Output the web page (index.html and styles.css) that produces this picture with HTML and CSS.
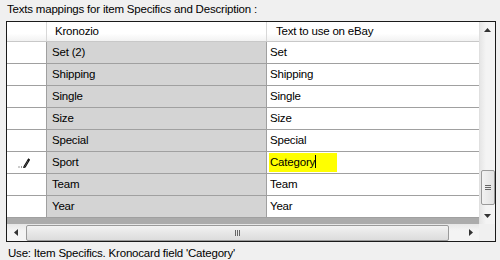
FILE: index.html
```html
<!DOCTYPE html>
<html>
<head>
<meta charset="utf-8">
<link rel="stylesheet" href="styles.css">
</head>
<body>
<div class="title">Texts mappings for item Specifics and Description :</div>
<div class="grid">
  <div class="main">
    <div class="row head">
      <div class="rh"></div>
      <div class="c1">Kronozio</div>
      <div class="c2">Text to use on eBay</div>
    </div>
    <div class="row"><div class="rh"></div><div class="c1">Set (2)</div><div class="c2">Set</div></div>
    <div class="row"><div class="rh"></div><div class="c1">Shipping</div><div class="c2">Shipping</div></div>
    <div class="row"><div class="rh"></div><div class="c1">Single</div><div class="c2">Single</div></div>
    <div class="row"><div class="rh"></div><div class="c1">Size</div><div class="c2">Size</div></div>
    <div class="row"><div class="rh"></div><div class="c1">Special</div><div class="c2">Special</div></div>
    <div class="row"><div class="rh"><svg class="pencil" width="12" height="11" viewBox="0 0 12 11"><path d="M0.5 10h1M3 10h1" stroke="#333" stroke-width="1"/><path d="M6 9.5 L10.5 2 L11.5 2.7 L7.2 10 L5.8 10.5 Z" fill="none" stroke="#111" stroke-width="1.1"/><path d="M9.8 3.2 L11 4" stroke="#111" stroke-width="0.9"/></svg></div><div class="c1">Sport</div><div class="c2"><span class="edit">Category<span class="caret"></span></span></div></div>
    <div class="row"><div class="rh"></div><div class="c1">Team</div><div class="c2">Team</div></div>
    <div class="row"><div class="rh"></div><div class="c1">Year</div><div class="c2">Year</div></div>
    <div class="band"></div>
  </div>
  <div class="vscroll">
    <div class="btn"><svg width="7" height="4" viewBox="0 0 7 4"><path d="M0 4 L3.5 0 L7 4 Z" fill="#333"/></svg></div>
    <div class="vtrack"><div class="vthumb"><span></span><span></span><span></span></div></div>
    <div class="btn"><svg width="7" height="4" viewBox="0 0 7 4"><path d="M0 0 L3.5 4 L7 0 Z" fill="#333"/></svg></div>
  </div>
  <div class="hscroll">
    <div class="hbtn"><svg width="4" height="7" viewBox="0 0 4 7"><path d="M4 0 L0 3.5 L4 7 Z" fill="#333"/></svg></div>
    <div class="htrack"><div class="hthumb"><span></span><span></span><span></span></div></div>
    <div class="hbtn"><svg width="4" height="7" viewBox="0 0 4 7"><path d="M0 0 L4 3.5 L0 7 Z" fill="#333"/></svg></div>
  </div>
  <div class="corner"></div>
</div>
<div class="status">Use: Item Specifics. Kronocard field 'Category'</div>
</body>
</html>
```
FILE: styles.css
```css
* { box-sizing: border-box; }
body {
  margin: 0;
  width: 500px;
  height: 260px;
  background: #f0f0f0;
  font-family: "Liberation Sans", Arial, sans-serif;
  font-size: 11.5px;
  letter-spacing: -0.2px;
  color: #000;
  overflow: hidden;
}
.title {
  height: 21px;
  padding: 2px 0 0 7px;
  line-height: 14px;
}
.grid {
  margin-left: 6px;
  width: 490px;
  height: 221px;
  border: 1px solid #1a1a1a;
  display: grid;
  grid-template-columns: 472px 16px;
  grid-template-rows: 202px 17px;
  background: #f0f0f0;
}
.main {
  display: flex;
  flex-direction: column;
  background: #ababab;
}
.row {
  display: grid;
  grid-template-columns: 40px 220px 212px;
  height: 22px;
  border-bottom: 1px solid #a0a0a0;
}
.row > div {
  line-height: 21px;
  white-space: nowrap;
  overflow: hidden;
}
.rh {
  background: #fff;
  border-right: 1px solid #a0a0a0;
  display: flex;
  align-items: center;
  padding-left: 7px;
}
.c1 {
  background: #d4d4d4;
  border-right: 1px solid #a0a0a0;
  padding-left: 5px;
}
.c2 {
  background: #fff;
  padding-left: 3px;
}
.row.head {
  height: 20px;
  border-bottom: 1px solid #c8c8c8;
}
.row.head > div {
  background: linear-gradient(#ffffff, #ffffff 60%, #f2f2f2);
  line-height: 19px;
  border-right: 1px solid #d8d8d8;
}
.row.head .c1 { padding-left: 8px; }
.row.head .c2 { padding-left: 9px; border-right: none; }
.pencil { display: block; margin-left: 4px; }
.edit {
  display: inline-block;
  background: #ffff00;
  height: 19px;
  width: 68px;
  margin-left: -1px;
  padding-left: 1px;
  line-height: 19px;
  vertical-align: top;
  margin-top: 1px;
}
.caret {
  display: inline-block;
  width: 1px;
  height: 13px;
  background: #000;
  vertical-align: -2px;
}
.band { height: 6px; }
.vscroll {
  display: flex;
  flex-direction: column;
  background: linear-gradient(90deg, #e6e6e6, #f4f4f4 40%, #f4f4f4);
  border-left: 1px solid #e0e0e0;
}
.btn {
  height: 16px;
  display: flex;
  align-items: center;
  justify-content: center;
}
.vtrack {
  flex: 1;
  position: relative;
}
.vthumb {
  position: absolute;
  left: 1px;
  right: 0;
  top: 132px;
  height: 35px;
  border: 1px solid #9a9a9a;
  border-radius: 2px;
  background: linear-gradient(90deg, #f2f2f2, #e2e2e2);
  display: flex;
  flex-direction: column;
  align-items: center;
  justify-content: center;
  gap: 1px;
}
.vthumb span, .hthumb span {
  display: block;
  background: #666;
}
.vthumb span { width: 6px; height: 1px; }
.hscroll {
  display: flex;
  background: linear-gradient(#e6e6e6, #f4f4f4 40%, #f4f4f4);
}
.hbtn {
  width: 17px;
  display: flex;
  align-items: center;
  justify-content: center;
}
.htrack {
  flex: 1;
  position: relative;
}
.hthumb {
  position: absolute;
  top: 1px;
  bottom: 0;
  left: 2px;
  width: 423px;
  border: 1px solid #9a9a9a;
  border-radius: 2px;
  background: linear-gradient(#f2f2f2, #dcdcdc);
  display: flex;
  align-items: center;
  justify-content: center;
  gap: 1px;
}
.hthumb span { width: 1px; height: 6px; }
.corner { background: #f0f0f0; }
.status {
  padding: 4px 0 0 8px;
  line-height: 14px;
}
```
